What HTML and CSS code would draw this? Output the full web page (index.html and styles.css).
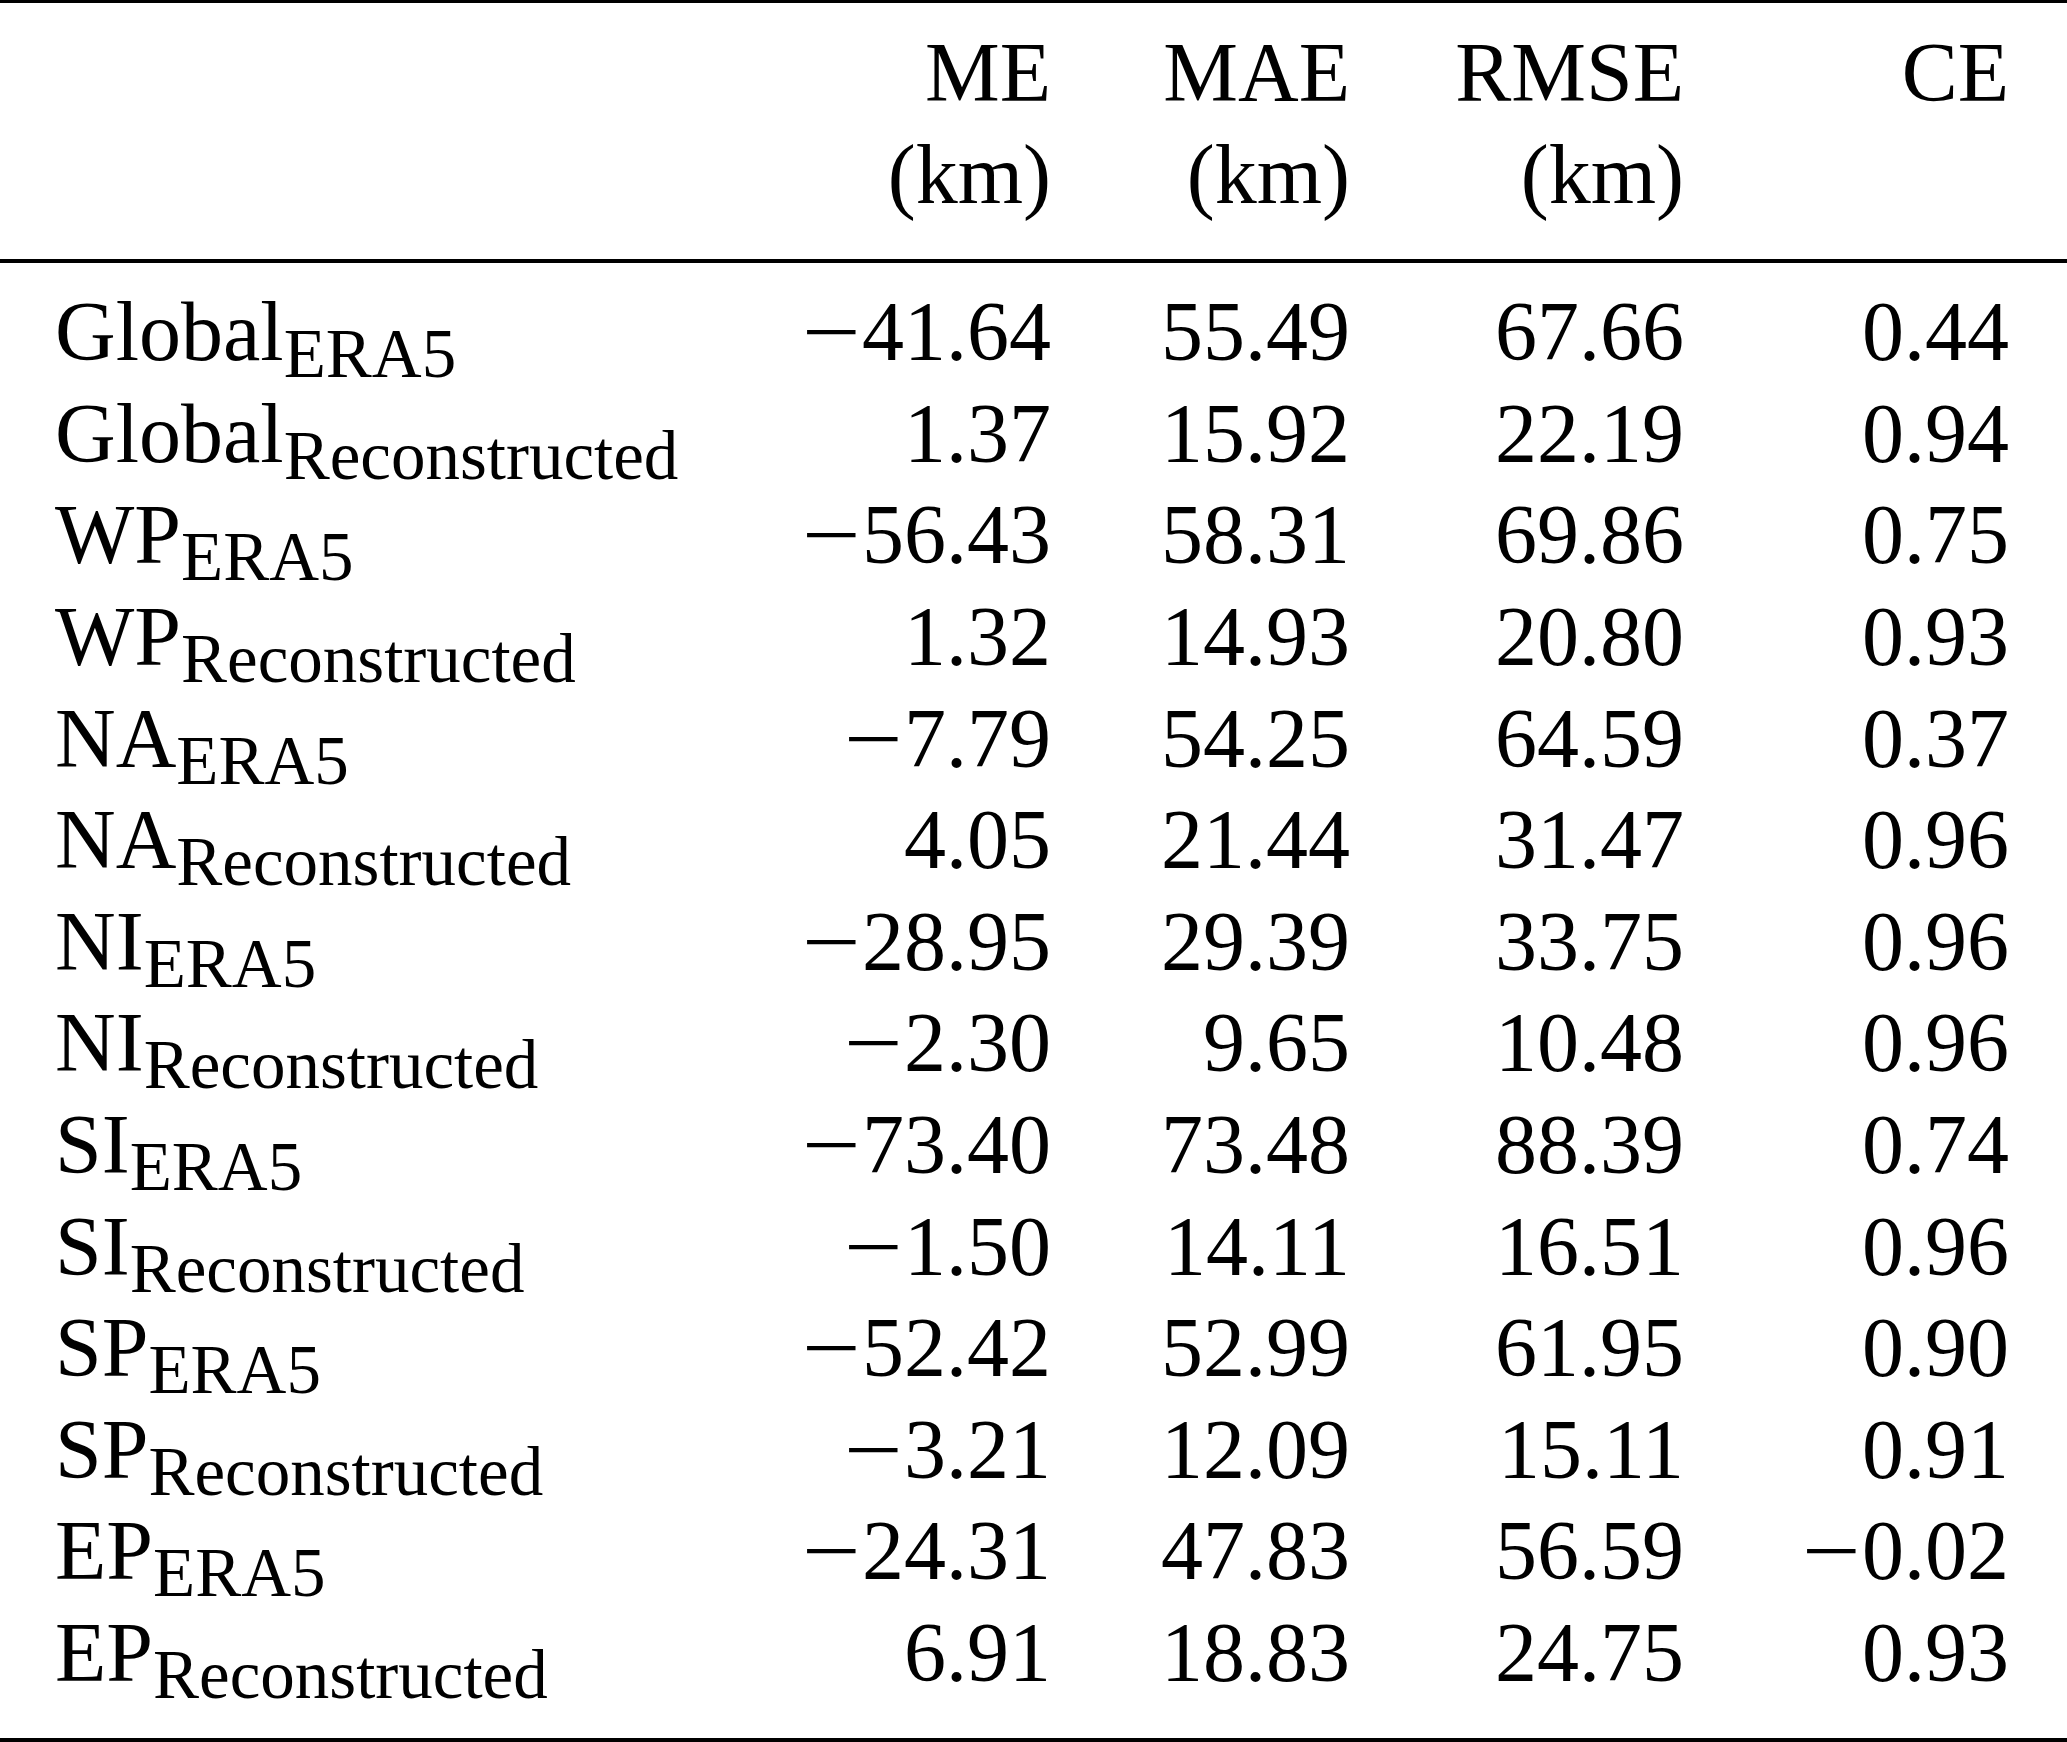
FILE: index.html
```html
<!DOCTYPE html>
<html lang="en">
<head>
<meta charset="utf-8">
<title>Track error statistics</title>
<link rel="stylesheet" href="styles.css">
</head>
<body>
<div class="table">
  <div class="rule rule-top"></div>
  <div class="head grid">
    <div class="cell label"></div>
    <div class="cell num">ME<br>(km)</div>
    <div class="cell num">MAE<br>(km)</div>
    <div class="cell num">RMSE<br>(km)</div>
    <div class="cell num">CE</div>
  </div>
  <div class="rule rule-mid"></div>
  <div class="body grid">
    <div class="cell label">Global<span class="sub">ERA5</span></div><div class="cell num"><span class="minus">−</span>41.64</div><div class="cell num">55.49</div><div class="cell num">67.66</div><div class="cell num">0.44</div>
    <div class="cell label">Global<span class="sub">Reconstructed</span></div><div class="cell num">1.37</div><div class="cell num">15.92</div><div class="cell num">22.19</div><div class="cell num">0.94</div>
    <div class="cell label">WP<span class="sub">ERA5</span></div><div class="cell num"><span class="minus">−</span>56.43</div><div class="cell num">58.31</div><div class="cell num">69.86</div><div class="cell num">0.75</div>
    <div class="cell label">WP<span class="sub">Reconstructed</span></div><div class="cell num">1.32</div><div class="cell num">14.93</div><div class="cell num">20.80</div><div class="cell num">0.93</div>
    <div class="cell label">NA<span class="sub">ERA5</span></div><div class="cell num"><span class="minus">−</span>7.79</div><div class="cell num">54.25</div><div class="cell num">64.59</div><div class="cell num">0.37</div>
    <div class="cell label">NA<span class="sub">Reconstructed</span></div><div class="cell num">4.05</div><div class="cell num">21.44</div><div class="cell num">31.47</div><div class="cell num">0.96</div>
    <div class="cell label">NI<span class="sub">ERA5</span></div><div class="cell num"><span class="minus">−</span>28.95</div><div class="cell num">29.39</div><div class="cell num">33.75</div><div class="cell num">0.96</div>
    <div class="cell label">NI<span class="sub">Reconstructed</span></div><div class="cell num"><span class="minus">−</span>2.30</div><div class="cell num">9.65</div><div class="cell num">10.48</div><div class="cell num">0.96</div>
    <div class="cell label">SI<span class="sub">ERA5</span></div><div class="cell num"><span class="minus">−</span>73.40</div><div class="cell num">73.48</div><div class="cell num">88.39</div><div class="cell num">0.74</div>
    <div class="cell label">SI<span class="sub">Reconstructed</span></div><div class="cell num"><span class="minus">−</span>1.50</div><div class="cell num">14.11</div><div class="cell num">16.51</div><div class="cell num">0.96</div>
    <div class="cell label">SP<span class="sub">ERA5</span></div><div class="cell num"><span class="minus">−</span>52.42</div><div class="cell num">52.99</div><div class="cell num">61.95</div><div class="cell num">0.90</div>
    <div class="cell label">SP<span class="sub">Reconstructed</span></div><div class="cell num"><span class="minus">−</span>3.21</div><div class="cell num">12.09</div><div class="cell num">15.11</div><div class="cell num">0.91</div>
    <div class="cell label">EP<span class="sub">ERA5</span></div><div class="cell num"><span class="minus">−</span>24.31</div><div class="cell num">47.83</div><div class="cell num">56.59</div><div class="cell num"><span class="minus">−</span>0.02</div>
    <div class="cell label">EP<span class="sub">Reconstructed</span></div><div class="cell num">6.91</div><div class="cell num">18.83</div><div class="cell num">24.75</div><div class="cell num">0.93</div>
  </div>
  <div class="rule rule-bottom"></div>
</div>
</body>
</html>
```
FILE: styles.css
```css
html, body {
  margin: 0;
  padding: 0;
  background: #ffffff;
}

body {
  font-family: "Liberation Serif", "Times New Roman", serif;
  color: #000000;
  font-size: 84px;
}

.table {
  width: 2067px;
  display: flex;
  flex-direction: column;
}

.rule {
  background: #000000;
  width: 100%;
}

.rule-top {
  height: 3px;
}

.rule-mid {
  height: 4px;
}

.rule-bottom {
  height: 4px;
}

.grid {
  display: grid;
  grid-template-columns: 705px 291px 299px 334px 325px;
  padding-left: 55px;
  padding-right: 58px;
  line-height: 101.6px;
}

.head {
  padding-top: 19px;
  padding-bottom: 34px;
}

.body {
  padding-top: 18px;
  padding-bottom: 34px;
}

.cell {
  white-space: nowrap;
}

.num {
  text-align: right;
}

.label {
  text-align: left;
}

.sub {
  font-size: 69px;
  line-height: 0;
  vertical-align: -17px;
}

.minus {
  display: inline-block;
  width: 60px;
  text-align: left;
  transform: scaleX(1.24);
  transform-origin: 0 50%;
}
```
